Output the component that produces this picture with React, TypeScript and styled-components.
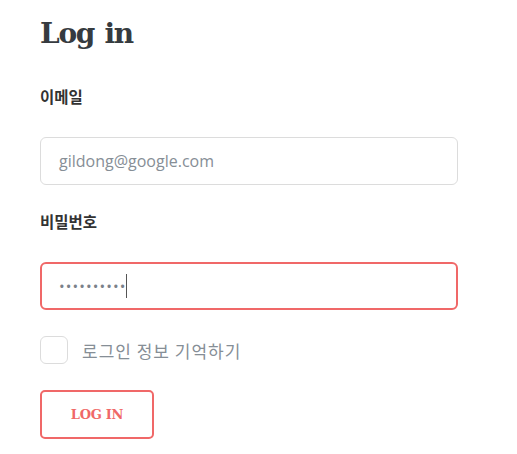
import React from "react";
import styled, { createGlobalStyle } from "styled-components";

const GlobalStyle = createGlobalStyle`
  html, body { margin: 0; padding: 0; background: #fff; }
  body { font-family: "Open Sans", "Noto Sans CJK KR", sans-serif; color: #333; }
  * { box-sizing: border-box; }
`;

const Page = styled.div`
  width: 517px;
  padding: 14px 59px 0 40px;
  display: flex;
  flex-direction: column;
`;

const Title = styled.h1`
  margin: 0 0 6px;
  font-family: "DejaVu Serif", serif;
  font-weight: 700;
  font-size: 28px;
  line-height: 40px;
  color: #363b40;
  letter-spacing: -1.3px;
  word-spacing: 2px;
`;

const Field = styled.div`
  display: flex;
  flex-direction: column;
`;

const Label = styled.label`
  font-family: "Noto Sans CJK KR", sans-serif;
  font-weight: 700;
  font-size: 15.5px;
  line-height: 20px;
  color: #333;
  margin-top: 26px;
  margin-bottom: 31px;
`;

const Input = styled.div<{ $focused?: boolean }>`
  height: 48px;
  border: ${(p) => (p.$focused ? "2px solid #f06868" : "1px solid #dcdcdc")};
  border-radius: 6px;
  padding-left: ${(p) => (p.$focused ? "17px" : "18px")};
  display: flex;
  align-items: center;
  font-family: "Open Sans", sans-serif;
  font-size: 16px;
  color: #868e96;
`;

const Dots = styled.span`
  letter-spacing: 1.1px;
  font-size: 15px;
  color: #7a818a;
`;

const Caret = styled.span`
  display: inline-block;
  width: 1px;
  height: 24px;
  background: #555;
  margin-left: 0;
`;

const Row = styled.div`
  display: flex;
  align-items: center;
  gap: 14px;
  margin-top: 26px;
`;

const Box = styled.span`
  width: 28px;
  height: 28px;
  border: 1px solid #dcdcdc;
  border-radius: 6px;
`;

const CheckLabel = styled.span`
  font-family: "Noto Sans CJK KR", sans-serif;
  font-size: 17px;
  color: #868e96;
  letter-spacing: 1px;
`;

const Button = styled.button`
  margin-top: 26px;
  align-self: flex-start;
  width: 114px;
  height: 49px;
  border: 2px solid #f06868;
  border-radius: 5px;
  background: #fff;
  color: #f06868;
  font-family: "DejaVu Serif", serif;
  font-weight: 700;
  font-size: 13px;
  letter-spacing: -0.3px;
  padding: 0;
`;

export default function App() {
  return (
    <>
      <GlobalStyle />
      <Page>
        <Title>Log in</Title>
        <Field>
          <Label>이메일</Label>
          <Input>gildong@google.com</Input>
        </Field>
        <Field>
          <Label>비밀번호</Label>
          <Input $focused>
            <Dots>••••••••••</Dots>
            <Caret />
          </Input>
        </Field>
        <Row>
          <Box />
          <CheckLabel>로그인 정보 기억하기</CheckLabel>
        </Row>
        <Button>LOG IN</Button>
      </Page>
    </>
  );
}
